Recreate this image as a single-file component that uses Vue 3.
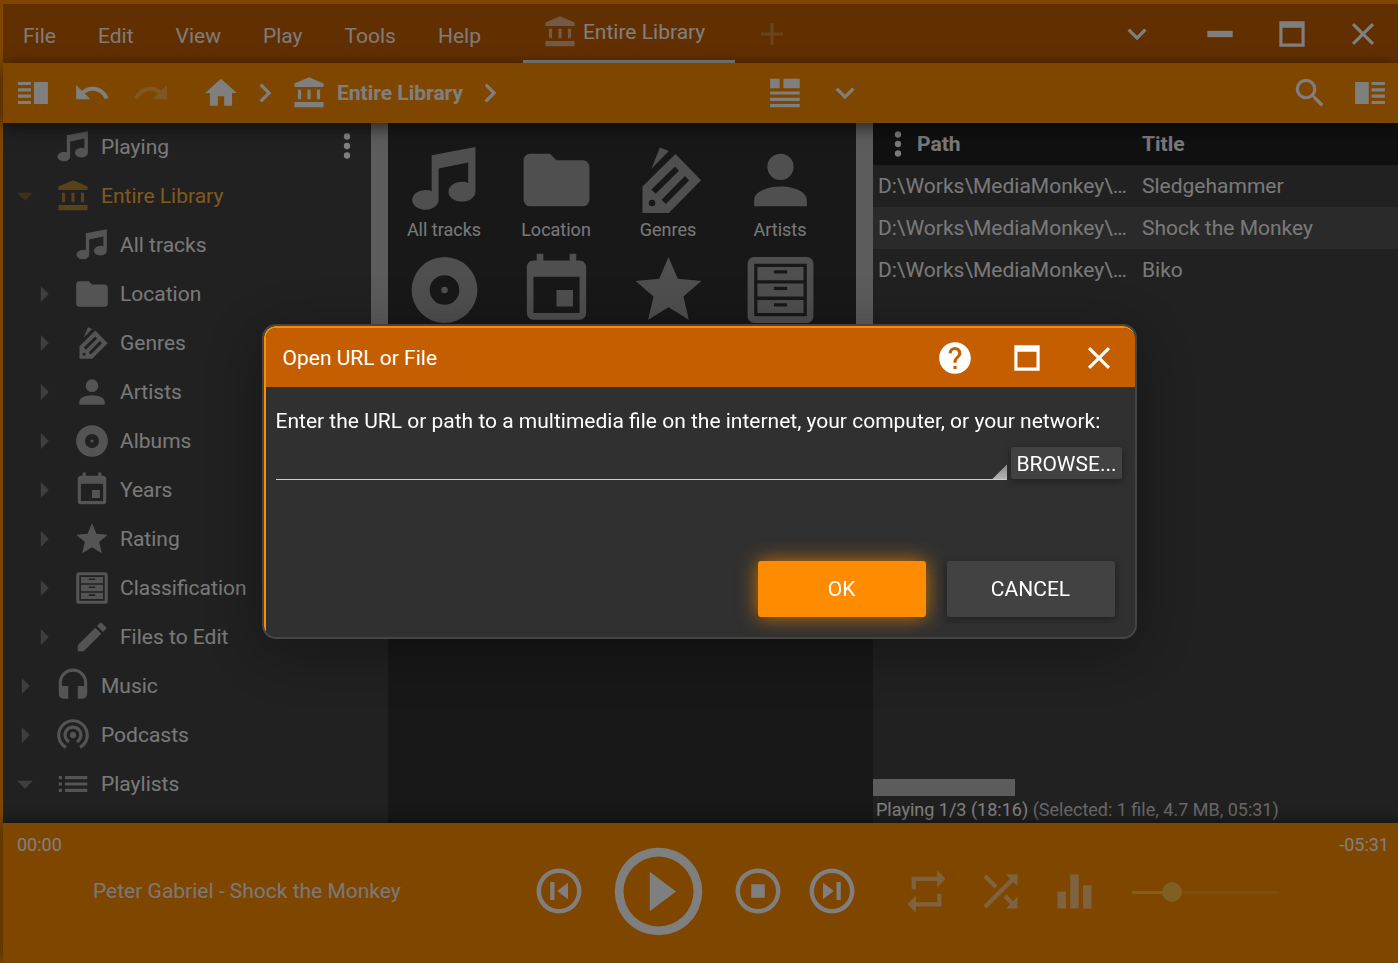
<script setup>
import { h, ref } from 'vue'

const paths = {
  bank: 'M12,2L2.8,6V8.2H21.2V6ZM5,10h2v6h-2zM11,10h2v6h-2zM17,10h2v6h-2zM2.8,17.7h18.4V21H2.8z',
  music: 'M21.4,2V15.5A4.1,3 0 1,1 19.2,12.9V6.7L10.2,8.5V18A4,3 0 1,1 8.1,15.4V4.5Z',
  folder: 'M10,4H4C2.89,4 2,4.89 2,6V18A2,2 0 0,0 4,20H20A2,2 0 0,0 22,18V8C22,6.89 21.1,6 20,6H12L10,4Z',
  genre: 'M4.1,22H12.1L21.9,12.1L14.1,4.1L4.1,14ZM14,7.9L15.2,9.2L8.1,16.2L6.8,14.9ZM17,10.8L18.3,12.1L11.2,19.3L9.9,18ZM7,18A1,1 0 0,1 7,20A1,1 0 0,1 7,18ZM9.4,2.1L12.1,3.2L6.8,8.6Z',
  person: 'M12,4A4,4 0 0,1 16,8A4,4 0 0,1 12,12A4,4 0 0,1 8,8A4,4 0 0,1 12,4M12,14C16.42,14 20,15.79 20,18V20H4V18C4,15.79 7.58,14 12,14Z',
  album: 'M12,2A10,10 0 0,0 12,22A10,10 0 0,0 12,2ZM12,7.5A4.5,4.5 0 0,1 12,16.5A4.5,4.5 0 0,1 12,7.5ZM12,11A1,1 0 0,0 12,13A1,1 0 0,0 12,11Z',
  calendar: 'M19,19H5V8H19M16,1V3H8V1H6V3H5C3.89,3 3,3.89 3,5V19A2,2 0 0,0 5,21H19A2,2 0 0,0 21,19V5C21,3.89 20.1,3 19,3H18V1M17,12H12V17H17V12Z',
  star: 'M12,17.27L18.18,21L16.54,13.97L22,9.24L14.81,8.62L12,2L9.19,8.62L2,9.24L7.45,13.97L5.82,21L12,17.27Z',
  drawers: 'M4,2H20A2,2 0 0,1 22,4V20A2,2 0 0,1 20,22H4A2,2 0 0,1 2,20V4A2,2 0 0,1 4,2ZM4,4V20H20V4ZM5,5H19V9H5ZM10,6V7H14V6ZM5,10H19V14H5ZM10,11V12H14V11ZM5,15H19V19H5ZM10,16V17H14V16Z',
  pencil: 'M20.71,7.04C21.1,6.65 21.1,6 20.71,5.63L18.37,3.29C18,2.9 17.35,2.9 16.96,3.29L15.12,5.12L18.87,8.87M3,17.25V21H6.75L17.81,9.93L14.06,6.18L3,17.25Z',
  headphones: 'M12,1C7,1 3,5 3,10V17A3,3 0 0,0 6,20H9V12H5V10A7,7 0 0,1 12,3A7,7 0 0,1 19,10V12H15V20H18A3,3 0 0,0 21,17V10C21,5 16.97,1 12,1Z',
  podcast: 'M12,10c-1.1,0-2,.9-2,2s.9,2 2,2 2-.9 2-2-.9-2-2-2zm6,2c0-3.31-2.69-6-6-6s-6,2.69-6,6c0,2.22 1.21,4.15 3,5.19l1-1.74c-1.19-.7-2-1.97-2-3.45 0-2.21 1.79-4 4-4s4,1.79 4,4c0,1.48-.81,2.75-2,3.45l1,1.74c1.79-1.04 3-2.97 3-5.19zM12,2C6.48,2 2,6.48 2,12c0,3.7 2.01,6.92 4.99,8.65l1-1.73C5.61,17.53 4,14.96 4,12c0-4.42 3.58-8 8-8s8,3.58 8,8c0,2.96-1.61,5.53-4,6.92l1,1.73c2.99-1.73 5-4.95 5-8.65 0-5.52-4.48-10-10-10z',
  list: 'M3,9H5V7H3V9M3,13H5V11H3V13M3,17H5V15H3V17M7,7V9H21V7H7M7,13H21V11H7V13M7,17H21V15H7V17Z',
  open: 'M7,10L12,15L17,10H7Z',
  closed: 'M10,17L15,12L10,7V17Z',
  dots: 'M12,16A2,2 0 0,1 12,20A2,2 0 0,1 12,16M12,10A2,2 0 0,1 12,14A2,2 0 0,1 12,10M12,4A2,2 0 0,1 12,8A2,2 0 0,1 12,4Z',
  plus: 'M19,13H13V19H11V13H5V11H11V5H13V11H19V13Z',
  chevronDown: 'M7.41,8.58L12,13.17L16.59,8.58L18,10L12,16L6,10L7.41,8.58Z',
  chevronRight: 'M8.59,16.58L13.17,12L8.59,7.41L10,6L16,12L10,18L8.59,16.58Z',
  minimize: 'M20,14H4V10H20Z',
  maximize: 'M4,4H20V20H4V4M6,8V18H18V8H6Z',
  close: 'M19,6.41L17.59,5L12,10.59L6.41,5L5,6.41L10.59,12L5,17.59L6.41,19L12,13.41L17.59,19L19,17.59L13.41,12L19,6.41Z',
  help: 'M15.07,11.25L14.17,12.17C13.45,12.89 13,13.5 13,15H11V14.5C11,13.39 11.45,12.39 12.17,11.67L13.41,10.41C13.78,10.05 14,9.55 14,9C14,7.89 13.1,7 12,7A2,2 0 0,0 10,9H8A4,4 0 0,1 12,5A4,4 0 0,1 16,9C16,9.88 15.64,10.67 15.07,11.25M13,19H11V17H13M12,2A10,10 0 0,0 2,12A10,10 0 0,0 12,22A10,10 0 0,0 22,12C22,6.47 17.5,2 12,2Z',
  panelLeft: 'M2.5,5h8.2v2h-8.2zM2.5,9h8.2v2h-8.2zM2.5,13h8.2v2h-8.2zM2.5,17h8.2v2h-8.2zM12.6,5h8.8v14h-8.8z',
  panelRight: 'M2.6,5h8.6v14h-8.6zM13,5h8.4v2h-8.4zM13,9h8.4v2h-8.4zM13,13h8.4v2h-8.4zM13,17h8.4v2h-8.4z',
  undo: 'M12.5,8C9.85,8 7.45,9 5.6,10.6L2,7V16H11L7.38,12.38C8.77,11.22 10.54,10.5 12.5,10.5C16.04,10.5 19.05,12.81 20.1,16L22.47,15.22C21.08,11.03 17.15,8 12.5,8Z',
  redo: 'M18.4,10.6C16.55,9 14.15,8 11.5,8C6.85,8 2.92,11.03 1.54,15.22L3.9,16C4.95,12.81 7.95,10.5 11.5,10.5C13.45,10.5 15.23,11.22 16.62,12.38L13,16H22V7L18.4,10.6Z',
  home: 'M10,20V14H14V20H19V12H22L12,3L2,12H5V20H10Z',
  view: 'M2.6,3h6v6h-6zM11,3h10.3v6h-10.3zM2.6,11h18.7v2h-18.7zM2.6,15h18.7v2h-18.7zM2.6,19h18.7v2h-18.7z',
  search: 'M9.5,3A6.5,6.5 0 0,1 16,9.5C16,11.11 15.41,12.59 14.44,13.73L14.71,14H15.5L20.5,19L19,20.5L14,15.5V14.71L13.73,14.44C12.59,15.41 11.11,16 9.5,16A6.5,6.5 0 0,1 3,9.5A6.5,6.5 0 0,1 9.5,3M9.5,5C7,5 5,7 5,9.5C5,12 7,14 9.5,14C12,14 14,12 14,9.5C14,7 12,5 9.5,5Z',
  prev: 'M12,2A10,10 0 0,0 12,22A10,10 0 0,0 12,2ZM12,4A8,8 0 0,1 12,20A8,8 0 0,1 12,4ZM8.1,8V16H10V8ZM16,8.3V15.7L11.2,12Z',
  play: 'M12,2A10,10 0 0,0 12,22A10,10 0 0,0 12,2ZM12,4A8,8 0 0,1 12,20A8,8 0 0,1 12,4ZM10,7.5V16.5L16,12Z',
  stop: 'M12,2A10,10 0 0,0 12,22A10,10 0 0,0 12,2ZM12,4A8,8 0 0,1 12,20A8,8 0 0,1 12,4ZM9,9V15H15V9Z',
  next: 'M12,2A10,10 0 0,0 12,22A10,10 0 0,0 12,2ZM12,4A8,8 0 0,1 12,20A8,8 0 0,1 12,4ZM14,8V16H15.9V8ZM8,8.3V15.7L12.8,12Z',
  repeat: 'M17,17H7V14L3,18L7,22V19H19V13H17M7,7H17V10L21,6L17,2V5H5V11H7V7Z',
  shuffle: 'M14.83,13.41L13.42,14.82L16.55,17.95L14.5,20H20V14.5L17.96,16.54L14.83,13.41M14.5,4L16.54,6.04L4,18.59L5.41,20L17.96,7.46L20,9.5V4M10.59,9.17L5.41,4L4,5.41L9.17,10.58L10.59,9.17Z',
  equalizer: 'M10,20H14V4H10V20M4,20H8V12H4V20M16,9V20H20V9H16Z'
}

const Icon = (props) =>
  h('svg', { viewBox: '0 0 24 24', fill: 'currentColor', 'fill-rule': 'evenodd', 'aria-hidden': 'true' }, [
    h('path', { d: paths[props.name] })
  ])
Icon.props = ['name']

const menus = ['File', 'Edit', 'View', 'Play', 'Tools', 'Help']

const tree = [
  { label: 'Playing', icon: 'music' },
  { label: 'Entire Library', icon: 'bank', arrow: 'open', active: true },
  { label: 'All tracks', icon: 'music', child: true },
  { label: 'Location', icon: 'folder', arrow: 'closed', child: true },
  { label: 'Genres', icon: 'genre', arrow: 'closed', child: true },
  { label: 'Artists', icon: 'person', arrow: 'closed', child: true },
  { label: 'Albums', icon: 'album', arrow: 'closed', child: true },
  { label: 'Years', icon: 'calendar', arrow: 'closed', child: true },
  { label: 'Rating', icon: 'star', arrow: 'closed', child: true },
  { label: 'Classification', icon: 'drawers', arrow: 'closed', child: true },
  { label: 'Files to Edit', icon: 'pencil', arrow: 'closed', child: true },
  { label: 'Music', icon: 'headphones', arrow: 'closed' },
  { label: 'Podcasts', icon: 'podcast', arrow: 'closed' },
  { label: 'Playlists', icon: 'list', arrow: 'open' }
]
const tiles = tree.slice(2, 10)

const tracks = [
  { path: 'D:\\Works\\MediaMonkey\\…', title: 'Sledgehammer' },
  { path: 'D:\\Works\\MediaMonkey\\…', title: 'Shock the Monkey', selected: true },
  { path: 'D:\\Works\\MediaMonkey\\…', title: 'Biko' }
]

const volume = ref(24)
const url = ref('')
</script>

<template>
  <div class="window">
    <header class="titlebar">
      <nav class="menus">
        <button v-for="m in menus" :key="m" class="menu">{{ m }}</button>
      </nav>
      <button class="tab"><Icon name="bank" class="icon half" /><span>Entire Library</span></button>
      <button class="new-tab" aria-label="New tab"><Icon name="plus" class="icon" /></button>
      <div class="window-buttons">
        <button class="tab-list" aria-label="Tab list"><Icon name="chevronDown" class="icon" /></button>
        <button class="wide" aria-label="Minimize"><Icon name="minimize" class="icon" /></button>
        <button class="wide" aria-label="Maximize"><Icon name="maximize" class="icon" /></button>
        <button class="wide" aria-label="Close"><Icon name="close" class="icon" /></button>
      </div>
    </header>

    <div class="toolbar">
      <div class="history">
        <button aria-label="Toggle left panel"><Icon name="panelLeft" class="icon" /></button>
        <button aria-label="Back"><Icon name="undo" class="icon" /></button>
        <button class="faded" aria-label="Forward"><Icon name="redo" class="icon" /></button>
      </div>
      <nav class="crumbs">
        <button aria-label="Home"><Icon name="home" class="icon" /></button>
        <Icon name="chevronRight" class="icon" />
        <button class="crumb"><Icon name="bank" class="icon" /><span>Entire Library</span></button>
        <Icon name="chevronRight" class="icon" />
      </nav>
      <div class="space-before"></div>
      <div class="views">
        <button aria-label="View mode"><Icon name="view" class="icon" /></button>
        <button aria-label="More views"><Icon name="chevronDown" class="icon" /></button>
      </div>
      <div class="space-after"></div>
      <div class="tools">
        <button aria-label="Search"><Icon name="search" class="icon" /></button>
        <button aria-label="Toggle right panel"><Icon name="panelRight" class="icon" /></button>
      </div>
    </div>

    <main class="content">
      <aside class="sidebar">
        <ul class="tree">
          <li v-for="n in tree" :key="n.label">
            <button class="node" :class="{ child: n.child, active: n.active }">
              <Icon v-if="n.arrow" :name="n.arrow" class="icon arrow" />
              <span v-else class="icon"></span>
              <Icon :name="n.icon" class="icon glyph" />
              <span class="label">{{ n.label }}</span>
            </button>
          </li>
        </ul>
        <button class="more" aria-label="Tree options"><Icon name="dots" class="icon" /></button>
        <div class="scroll"></div>
      </aside>

      <section class="browser">
        <div class="tiles">
          <button v-for="t in tiles" :key="t.label" class="tile">
            <Icon :name="t.icon" class="tile-icon" />
            <span>{{ t.label }}</span>
          </button>
        </div>
        <div class="scroll"></div>
      </section>

      <section class="tracks">
        <table>
          <colgroup><col class="path-col" /><col /></colgroup>
          <thead>
            <tr>
              <th>
                <div class="path-head">
                  <button aria-label="Columns"><Icon name="dots" class="icon" /></button>
                  <span>Path</span>
                </div>
              </th>
              <th>Title</th>
            </tr>
          </thead>
          <tbody>
            <tr v-for="t in tracks" :key="t.title" :class="{ selected: t.selected }">
              <td>{{ t.path }}</td>
              <td>{{ t.title }}</td>
            </tr>
          </tbody>
        </table>
        <div class="hscroll"></div>
        <p class="status">Playing 1/3 (18:16) <span>(Selected: 1 file, 4.7 MB, 05:31)</span></p>
      </section>
    </main>

    <footer class="player">
      <span class="time">00:00</span>
      <span class="song">Peter Gabriel - Shock the Monkey</span>
      <div class="transport">
        <button aria-label="Previous"><Icon name="prev" class="round" /></button>
        <button aria-label="Play"><Icon name="play" class="big" /></button>
        <button aria-label="Stop"><Icon name="stop" class="round" /></button>
        <button aria-label="Next"><Icon name="next" class="round" /></button>
      </div>
      <div class="modes">
        <button aria-label="Repeat"><Icon name="repeat" class="mode" /></button>
        <button aria-label="Shuffle"><Icon name="shuffle" class="mode" /></button>
        <button aria-label="Equalizer"><Icon name="equalizer" class="mode" /></button>
      </div>
      <input v-model="volume" class="volume" type="range" min="0" max="100" aria-label="Volume" />
      <span class="time remaining">-05:31</span>
    </footer>

    <div class="backdrop">
      <div class="dialog" role="dialog" aria-labelledby="dialog-title">
        <form class="dialog-inner" @submit.prevent>
          <div class="dialog-head">
            <h1 id="dialog-title">Open URL or File</h1>
            <button type="button" class="wide" aria-label="Help"><Icon name="help" class="icon" /></button>
            <button type="button" class="wide" aria-label="Maximize dialog"><Icon name="maximize" class="icon" /></button>
            <button type="button" class="wide" aria-label="Close dialog"><Icon name="close" class="icon" /></button>
          </div>
          <div class="dialog-body">
            <label for="url">Enter the URL or path to a multimedia file on the internet, your computer, or your network:</label>
            <div class="field">
              <div class="combo">
                <input id="url" v-model="url" type="text" />
                <span class="corner"></span>
              </div>
              <button type="button" class="browse">BROWSE...</button>
            </div>
            <div class="actions">
              <button type="submit" class="action primary">OK</button>
              <button type="button" class="action">CANCEL</button>
            </div>
          </div>
        </form>
      </div>
    </div>
  </div>
</template>

<style>
body {
  background: #303030;
}
</style>

<style scoped>
.window,
.window * {
  box-sizing: border-box;
}
.window {
  display: flex;
  flex-direction: column;
  min-height: 100vh;
  border-top: 4px solid #ff8c00;
  border-left: 3px solid #ff8c00;
  color: #fff;
  font-family: Roboto, "Liberation Sans", sans-serif;
  font-size: 21px;
  line-height: 28px;
}
button {
  display: flex;
  align-items: center;
  justify-content: center;
  padding: 0;
  border: 0;
  background: none;
  color: inherit;
  font: inherit;
  white-space: nowrap;
}
.icon {
  flex: none;
  width: 38px;
  height: 38px;
}
.titlebar {
  display: flex;
  height: 59px;
  background: #c45e00;
}
.menus {
  display: flex;
  gap: 42px;
  padding: 4px 42px 0 20px;
}
.menu {
  opacity: 0.95;
}
.tab {
  gap: 4px;
  padding: 0 30px 0 18px;
  border-bottom: 3px solid #fff;
}
.half {
  opacity: 0.55;
}
.new-tab {
  width: 73px;
  opacity: 0.25;
}
.window-buttons {
  display: flex;
  margin-left: auto;
}
.wide {
  width: 72px;
}
.titlebar .wide:last-child {
  width: 70px;
}
.tab-list {
  width: 94px;
}
.toolbar {
  position: relative;
  z-index: 1;
  display: flex;
  align-items: center;
  height: 60px;
  padding: 0 9px 0 11px;
  background: #ff8c00;
  box-shadow: 0 4px 16px rgba(0, 0, 0, 0.6);
}
.history,
.views,
.tools {
  display: flex;
  gap: 22px;
}
.history {
  gap: 21px;
}
.faded {
  opacity: 0.3;
}
.crumbs {
  display: flex;
  align-items: center;
  margin-left: 32px;
  gap: 6px;
}
.crumb {
  gap: 9px;
  padding-right: 2px;
  font-weight: 700;
}
.space-before {
  flex: 3;
}
.space-after {
  flex: 5;
}
.content {
  display: grid;
  grid-template-columns: 385px 485px minmax(0, 1fr);
  flex: 1;
}
.sidebar {
  display: flex;
  background: #424242;
}
.tree {
  flex: 1;
  margin: -1px 0 0;
  padding: 0;
  list-style: none;
}
.node {
  justify-content: flex-start;
  width: 100%;
  height: 49px;
  padding-left: 3px;
  color: #f2f2f2;
}
.child {
  padding-left: 22px;
}
.glyph {
  margin: 0 9px 0 10px;
  color: #a8a8a8;
}
.arrow {
  color: #7c7c7c;
}
.active {
  color: #ffb33c;
}
.active .glyph {
  color: #b28232;
}
.active .arrow {
  color: #80602f;
}
.more {
  width: 48px;
  height: 45px;
}
.scroll {
  flex: none;
  width: 17px;
  height: 400px;
  background: #b8b8b8;
}
.browser {
  display: flex;
  background: #303030;
}
.tiles {
  display: grid;
  grid-template-columns: repeat(auto-fill, 112px);
  align-content: start;
  flex: 1;
  row-gap: 10px;
  padding-top: 17px;
}
.tile {
  flex-direction: column;
  color: #f2f2f2;
  font-size: 18px;
  line-height: 20px;
}
.tile-icon {
  width: 79px;
  height: 80px;
  color: #9e9e9e;
}
.tracks {
  display: flex;
  flex-direction: column;
  background: #424242;
}
table {
  width: 100%;
  border-collapse: collapse;
  table-layout: fixed;
  text-align: left;
}
.path-col {
  width: 264px;
}
th,
td {
  height: 42px;
  padding: 0 5px;
  overflow: hidden;
  color: #f2f2f2;
  white-space: nowrap;
}
thead {
  background: #212121;
}
th {
  font-weight: 700;
}
.path-head {
  display: flex;
  align-items: center;
  padding-left: 1px;
}
.selected {
  background: #545454;
}
.hscroll {
  width: 142px;
  height: 17px;
  margin-top: auto;
  background: #b8b8b8;
}
.status {
  margin: 0;
  padding: 1px 0 0 3px;
  font-size: 18px;
  line-height: 26px;
}
.status span {
  color: #d0d0d0;
}
.player {
  position: relative;
  display: flex;
  align-items: center;
  height: 140px;
  padding: 0 9px 4px 14px;
  background: #ff8c00;
  box-shadow: 0 -2px 12px rgba(0, 0, 0, 0.5);
  color: #fff;
}
.time {
  align-self: flex-start;
  width: 76px;
  margin-top: 12px;
  font-size: 18px;
  line-height: 20px;
}
.remaining {
  width: 110px;
  text-align: right;
}
.song {
  flex: 1;
  color: #f2f2f2;
}
.transport {
  display: flex;
  align-items: center;
  gap: 20px;
}
.round {
  width: 54px;
  height: 54px;
}
.big {
  width: 105px;
  height: 105px;
}
.modes {
  display: flex;
  gap: 23px;
  margin: 0 32px 0 42px;
  opacity: 0.5;
}
.mode {
  width: 51px;
  height: 51px;
}
.volume {
  width: 147px;
  height: 20px;
  margin: 2px 0 0;
  appearance: none;
  background: linear-gradient(to right, #ffc040 28%, #ff9a20 28%) center / 100% 3px no-repeat;
}
.volume::-webkit-slider-thumb {
  appearance: none;
  width: 20px;
  height: 20px;
  border-radius: 50%;
  background: #ffc040;
}
.backdrop {
  position: fixed;
  inset: 0;
  z-index: 2;
  display: flex;
  align-items: center;
  justify-content: center;
  background: rgba(0, 0, 0, 0.5);
}
.dialog {
  width: 875px;
  max-width: 100%;
  overflow: hidden;
  border: 2px solid #444;
  border-radius: 14px;
  background: #303030;
  box-shadow: 0 12px 60px rgba(0, 0, 0, 0.35);
}
.dialog-inner {
  border-top: 2px solid #ff8c00;
  border-left: 2px solid #ff8c00;
  border-radius: 12px 12px 0 0;
  overflow: hidden;
}
.dialog-head {
  display: flex;
  height: 59px;
  background: #c45e00;
}
h1 {
  flex: 1;
  align-self: center;
  margin: 0;
  padding-left: 17px;
  font-size: 21px;
  font-weight: 400;
}
.dialog-body {
  padding: 20px 13px 20px 10px;
}
label {
  display: block;
}
.field {
  display: flex;
  align-items: flex-start;
  gap: 4px;
  margin-top: 12px;
}
.combo {
  position: relative;
  flex: 1;
}
.combo input {
  display: block;
  width: 100%;
  height: 33px;
  padding: 0 20px 0 4px;
  border: 0;
  border-bottom: 1px solid #ccc;
  outline: 0;
  background: none;
  color: #fff;
  font: inherit;
}
.corner {
  position: absolute;
  right: 0;
  bottom: 1px;
  width: 15px;
  height: 15px;
  background: linear-gradient(to bottom, #888, #b4b4b4);
  clip-path: polygon(100% 0, 100% 100%, 0 100%);
}
.browse,
.action {
  border-radius: 3px;
  background: #424242;
  box-shadow: 0 2px 10px rgba(0, 0, 0, 0.35);
}
.browse {
  height: 32px;
  padding: 2px 5px 0;
}
.actions {
  display: flex;
  justify-content: flex-end;
  gap: 21px;
  margin: 81px 7px 0 0;
}
.action {
  width: 168px;
  height: 56px;
}
.primary {
  background: #ff8c00;
  box-shadow: 0 0 20px rgba(255, 140, 0, 0.75);
}
</style>
